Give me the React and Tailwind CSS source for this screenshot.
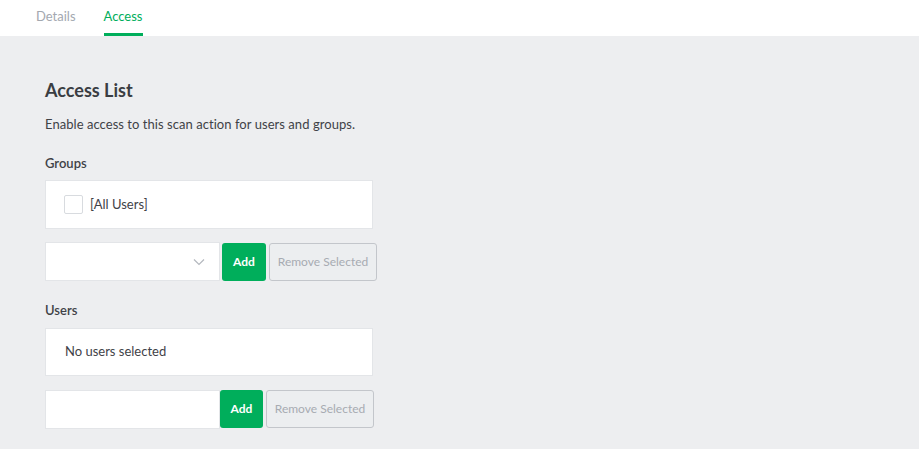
import { useState } from "react";

function Tabs() {
  return (
    <div className="h-[36px] bg-white flex items-end pl-[36px] gap-[28px]">
      <div className="h-full flex items-center text-[13px] text-[#a3a8b0] pb-[3px]">Details</div>
      <div className="h-full flex flex-col justify-between">
        <div className="flex-1 flex items-center text-[13px] text-[#00ae5b]">Access</div>
        <div className="h-[3px] bg-[#00ae5b]" />
      </div>
    </div>
  );
}

export default function App() {
  const [allUsers, setAllUsers] = useState(false);

  return (
    <div className="min-h-[449px] bg-[#edeef0] text-[#3f4247]" style={{ fontFamily: "Lato, 'Liberation Sans', sans-serif" }}>
      <Tabs />

      <div className="pl-[45px] pt-[42px]">
        <h2 className="text-[18px] font-bold text-[#3a3d42] leading-[24px]">Access List</h2>
        <p className="text-[13px] mt-[13px] tracking-[0.05px]">Enable access to this scan action for users and groups.</p>

        {/* GROUPS */}
        <div className="text-[13px] font-semibold mt-[19px]">Groups</div>
        <div className="w-[328px] h-[49px] mt-[7px] bg-white border border-[#e3e5e8] flex items-center pl-[18px]">
          <button
            onClick={() => setAllUsers(!allUsers)}
            className="w-[19px] h-[19px] border border-[#d8dbdf] rounded-[2px] bg-white"
          />
          <span className="ml-[7px] text-[13px]">[All Users]</span>
        </div>
        <div className="flex items-center mt-[13px]">
          <div className="w-[175px] h-[39px] bg-white border border-[#e3e5e8] flex items-center justify-end pr-[14px]">
            <svg width="12" height="8" viewBox="0 0 12 8" fill="none" stroke="#b4b8be" strokeWidth="1.2">
              <path d="M1 1.5l5 5 5-5" />
            </svg>
          </div>
          <button className="h-[38px] w-[44px] ml-[2px] rounded-[3px] bg-[#00ae5b] text-white text-[12px] font-bold">
            Add
          </button>
          <button className="h-[38px] w-[108px] ml-[3px] rounded-[3px] border border-[#c3c6cb] bg-[#eceef0] text-[#a7abb2] text-[12px]">
            Remove Selected
          </button>
        </div>

        {/* USERS */}
        <div className="text-[13px] font-semibold mt-[20px]">Users</div>
        <div className="w-[328px] h-[48px] mt-[7px] bg-white border border-[#e3e5e8] flex items-center pl-[19px]">
          <span className="text-[13px]">No users selected</span>
        </div>
        <div className="flex items-center mt-[14px]">
          <input className="w-[175px] h-[39px] bg-white border border-[#e3e5e8] outline-none px-2" />
          <button className="h-[38px] w-[43px] rounded-[3px] bg-[#00ae5b] text-white text-[12px] font-bold">
            Add
          </button>
          <button className="h-[38px] w-[108px] ml-[3px] rounded-[3px] border border-[#c3c6cb] bg-[#eceef0] text-[#a7abb2] text-[12px]">
            Remove Selected
          </button>
        </div>
      </div>
    </div>
  );
}
